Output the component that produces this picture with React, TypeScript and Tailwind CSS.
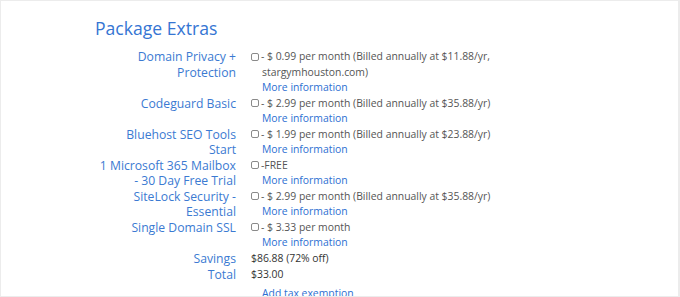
import React from "react"

type Extra = {
  label: string[]
  price: React.ReactNode
  link: string
}

const EXTRAS: Extra[] = [
  {
    label: ["Domain Privacy +", "Protection"],
    price: (
      <>
        - $ 0.99 per month (Billed annually at $11.88/yr,
        <br />
        stargymhouston.com)
      </>
    ),
    link: "More information",
  },
  {
    label: ["Codeguard Basic"],
    price: "- $ 2.99 per month (Billed annually at $35.88/yr)",
    link: "More information",
  },
  {
    label: ["Bluehost SEO Tools", "Start"],
    price: "- $ 1.99 per month (Billed annually at $23.88/yr)",
    link: "More information",
  },
  {
    label: ["1 Microsoft 365 Mailbox", "- 30 Day Free Trial"],
    price: "-FREE",
    link: "More information",
  },
  {
    label: ["SiteLock Security -", "Essential"],
    price: "- $ 2.99 per month (Billed annually at $35.88/yr)",
    link: "More information",
  },
  {
    label: ["Single Domain SSL"],
    price: "- $ 3.33 per month",
    link: "More information",
  },
]

function Checkbox() {
  return (
    <span className="inline-block w-[8px] h-[8px] border border-[#8a8a8a] rounded-[2px] bg-white ml-[-11px] mr-[2px] align-[-0.5px]" />
  )
}

export default function App() {
  return (
    <div
      className="w-[680px] h-[297px] bg-white border-t border-l border-b border-r-2 border-[#ececec] overflow-hidden"
      style={{ fontFamily: '"Open Sans", Arial, sans-serif' }}
    >
      <div className="pl-[94px] pt-[13px]">
        <h2 className="text-[17.6px] leading-[28px] text-[#3575d3] font-normal">Package Extras</h2>

        <div className="mt-[7px] grid grid-cols-[141px_1fr] gap-x-[15px]">
          {EXTRAS.map((x) => (
            <React.Fragment key={x.label[0]}>
              <div className="text-right text-[12.2px] leading-[15.5px] text-[#3b7ad2] whitespace-nowrap">
                {x.label.map((l) => (
                  <div key={l}>{l}</div>
                ))}
              </div>
              <div className="pl-[11px] text-[10.4px] leading-[15.5px] text-[#555]">
                <div>
                  <Checkbox />
                  {x.price}
                </div>
                <div className="text-[#2d6fd2]">{x.link}</div>
              </div>
            </React.Fragment>
          ))}

          <div className="text-right text-[12.2px] leading-[15.5px] text-[#3b7ad2]">Savings</div>
          <div className="text-[10.4px] leading-[15.5px] text-[#333]">$86.88 (72% off)</div>

          <div className="text-right text-[12.2px] leading-[15.5px] text-[#3b7ad2] mt-[1px]">Total</div>
          <div className="text-[10.4px] leading-[15.5px] text-[#333] mt-[1px]">$33.00</div>

          <div />
          <div className="pl-[11px] mt-[3px] text-[10.4px] leading-[15.5px] text-[#2d6fd2]">Add tax exemption</div>
        </div>
      </div>
    </div>
  )
}
